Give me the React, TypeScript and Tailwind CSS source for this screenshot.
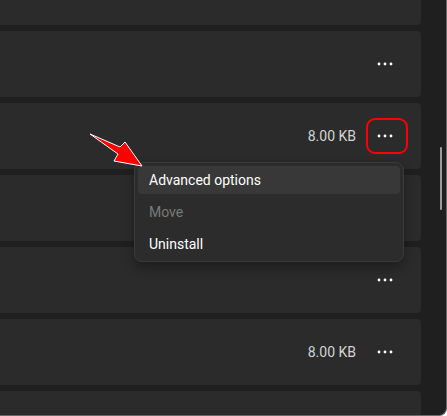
import React from "react";

type Row = { size?: string; active?: boolean };

const rows: Row[] = [
  {},
  {},
  { size: "8.00 KB", active: true },
  {},
  {},
  { size: "8.00 KB" },
  {},
];

function Dots() {
  return (
    <svg width="16" height="4" viewBox="0 0 16 4" className="text-white">
      <circle cx="2" cy="2" r="1.4" fill="currentColor" />
      <circle cx="8" cy="2" r="1.4" fill="currentColor" />
      <circle cx="14" cy="2" r="1.4" fill="currentColor" />
    </svg>
  );
}

function AppRow({ size, active }: Row) {
  return (
    <div className="relative flex h-[66px] shrink-0 items-center justify-end rounded-[4px] bg-[#2b2b2b] pr-4">
      {size && <span className="mr-[9px] text-[14px] text-[#d4d4d4]">{size}</span>}
      <button className="flex h-8 w-10 items-center justify-center rounded-[4px]">
        <Dots />
      </button>
      {active && (
        <div className="absolute right-[13px] top-[15px] h-[36px] w-[42px] rounded-[9px] border-2 border-[#ff0000]" />
      )}
    </div>
  );
}

export default function App() {
  return (
    <div className="relative h-[416px] w-[447px] overflow-hidden rounded-br-[8px] border-b border-r border-[#6a6a6a] bg-[#1f1f1f] font-['Roboto',sans-serif]">
      <div className="-ml-[12px] -mt-[41px] flex w-[433px] flex-col gap-[6px]">
        {rows.map((r, i) => (
          <AppRow key={i} {...r} />
        ))}
      </div>

      {/* scrollbar */}
      <div className="absolute left-[440px] top-[147px] h-[63px] w-[2px] rounded-full bg-[#9c9c9c]" />

      {/* context menu */}
      <div className="absolute left-[134px] top-[162px] w-[270px] rounded-[8px] border border-[#3a3a3a] bg-[#2c2c2c] p-[3px] shadow-[0_6px_12px_rgba(0,0,0,0.3)]">
        <div className="flex h-[28px] items-center rounded-[4px] bg-[#383838] px-[11px] text-[14px] text-white">
          Advanced options
        </div>
        <div className="mt-[4px] flex h-[28px] items-center px-[11px] text-[14px] text-[#7a7a7a]">
          Move
        </div>
        <div className="mt-[4px] flex h-[28px] items-center px-[11px] text-[14px] text-white">
          Uninstall
        </div>
      </div>

      {/* annotation arrow */}
      <svg className="absolute left-0 top-0" width="447" height="416" viewBox="0 0 447 416">
        <polygon
          points="90,134 120,147 125,142 142,166 114,161 118,154"
          fill="#ff0000"
          stroke="#ffffff"
          strokeWidth="1"
          strokeLinejoin="round"
        />
      </svg>
    </div>
  );
}
